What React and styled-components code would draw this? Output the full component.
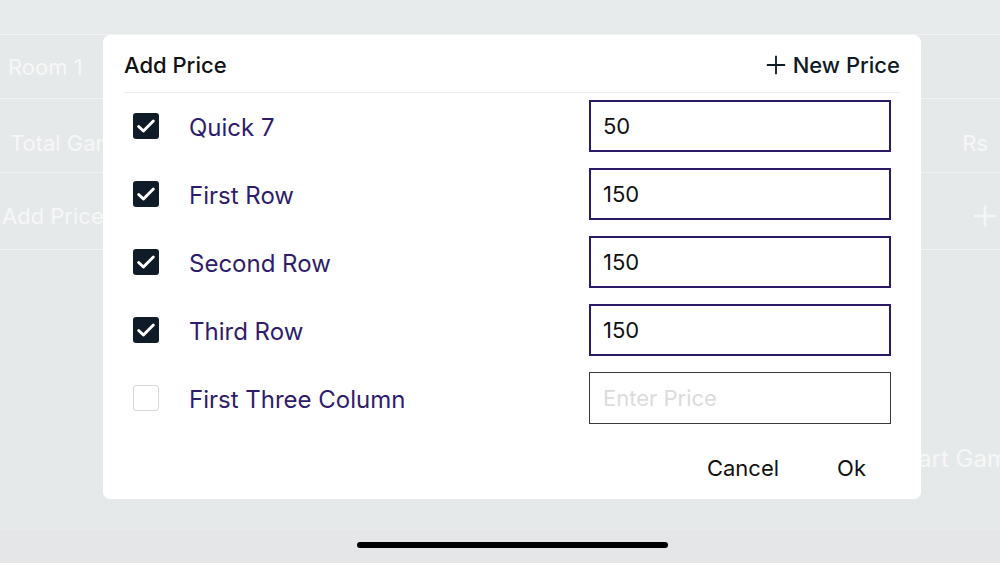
import React, { useState } from "react";
import styled, { createGlobalStyle } from "styled-components";

const GlobalStyle = createGlobalStyle`
  * { box-sizing: border-box; }
  html, body { margin: 0; padding: 0; }
  body {
    width: 1000px;
    height: 563px;
    overflow: hidden;
    font-family: Inter, "Noto Sans", sans-serif;
    background: #e6e9ea;
  }
`;

const PRICES = [
  { id: 1, name: "Quick 7", value: "50", checked: true },
  { id: 2, name: "First Row", value: "150", checked: true },
  { id: 3, name: "Second Row", value: "150", checked: true },
  { id: 4, name: "Third Row", value: "150", checked: true },
  { id: 5, name: "First Three Column", value: "", checked: false },
];

const CheckIcon = () => (
  <svg width="22" height="22" viewBox="0 0 24 24" fill="none">
    <path
      d="M4 12.5l5.2 5L20 6.5"
      stroke="#fff"
      strokeWidth="3.2"
      strokeLinecap="round"
      strokeLinejoin="round"
    />
  </svg>
);

const PlusIcon = ({ size = 22, color = "#0f1b24", weight = 2 }) => (
  <svg width={size} height={size} viewBox="0 0 24 24" fill="none">
    <path d="M12 2v20M2 12h20" stroke={color} strokeWidth={weight} />
  </svg>
);

const App = () => {
  const [prices, setPrices] = useState(PRICES);
  const toggle = id =>
    setPrices(prices.map(p => (p.id === id ? { ...p, checked: !p.checked } : p)));
  const change = (id, value) =>
    setPrices(prices.map(p => (p.id === id ? { ...p, value } : p)));

  return (
    <Screen>
      <GlobalStyle />
      <TopBand />
      <BgRow height={64}>
        <BgText>Room 1</BgText>
      </BgRow>
      <BgRow height={74} shift={14}>
        <BgText left={10}>Total Games</BgText>
        <BgText>Rs</BgText>
      </BgRow>
      <BgRow height={77} shift={10}>
        <BgText left={2}>Add Price</BgText>
        <PlusIcon size={26} color="#f4f6f6" weight={2.5} />
      </BgRow>
      <Filler>
        <StartText>Start Game</StartText>
      </Filler>
      <HomeArea>
        <HomeBar />
      </HomeArea>

      <Modal>
        <Header>
          <Title>Add Price</Title>
          <NewPrice>
            <PlusIcon size={22} />
            New Price
          </NewPrice>
        </Header>
        <List>
          {prices.map(p => (
            <Row key={p.id}>
              <Check checked={p.checked} onClick={() => toggle(p.id)}>
                {p.checked && <CheckIcon />}
              </Check>
              <Label>{p.name}</Label>
              <PriceInput
                active={p.checked}
                value={p.value}
                placeholder="Enter Price"
                onChange={e => change(p.id, e.target.value)}
              />
            </Row>
          ))}
        </List>
        <Footer>
          <TextButton>Cancel</TextButton>
          <TextButton>Ok</TextButton>
        </Footer>
      </Modal>
    </Screen>
  );
};

const Screen = styled.div`
  position: relative;
  width: 1000px;
  height: 563px;
  overflow: hidden;
  display: flex;
  flex-direction: column;
  background: #e6e9ea;
`;

const TopBand = styled.div`
  height: 35px;
  flex: none;
  background: #e8ebec;
  border-bottom: 1px solid #f2f4f4;
`;

const BgRow = styled.div`
  height: ${p => p.height}px;
  flex: none;
  display: flex;
  align-items: center;
  justify-content: space-between;
  padding: ${p => p.shift || 0}px 2px 0 8px;
  border-bottom: 1px solid #f1f3f4;
`;

const BgText = styled.span`
  margin-left: ${p => (p.left !== undefined ? p.left - 8 : 0)}px;
  margin-right: 10px;
  font-size: 22px;
  color: #f6f7f7;
`;

const Filler = styled.div`
  flex: 1;
  display: flex;
  justify-content: flex-end;
  align-items: flex-start;
  padding-top: 194px;
  overflow: hidden;
`;

const StartText = styled.span`
  flex: none;
  margin-right: -22px;
  font-size: 24px;
  white-space: nowrap;
  color: #f6f7f7;
`;

const HomeArea = styled.div`
  height: 33px;
  flex: none;
  background: #e4e6e7;
  display: flex;
  justify-content: center;
  padding-top: 12px;
`;

const HomeBar = styled.div`
  width: 311px;
  height: 6px;
  border-radius: 3px;
  background: #000;
  margin-left: 25px;
`;

const Modal = styled.div`
  position: absolute;
  left: 103px;
  top: 35px;
  width: 818px;
  height: 464px;
  background: #ffffff;
  border-radius: 7px;
  padding: 0 21px;
  display: flex;
  flex-direction: column;
`;

const Header = styled.div`
  height: 58px;
  display: flex;
  align-items: center;
  justify-content: space-between;
  border-bottom: 1px solid #ebeced;
  padding-top: 2px;
`;

const Title = styled.h2`
  margin: 0;
  font-size: 22px;
  font-weight: 500;
  color: #111;
`;

const NewPrice = styled.button`
  display: flex;
  align-items: center;
  gap: 6px;
  border: none;
  background: none;
  padding: 0;
  font-family: inherit;
  font-size: 22px;
  font-weight: 500;
  color: #0f1b24;
`;

const List = styled.div`
  display: flex;
  flex-direction: column;
  gap: 16px;
  padding: 7px 9px 0 9px;
`;

const Row = styled.div`
  height: 52px;
  display: flex;
  align-items: center;
`;

const Check = styled.div`
  width: 26px;
  height: 26px;
  flex: none;
  border-radius: 3px;
  display: flex;
  align-items: center;
  justify-content: center;
  background: ${p => (p.checked ? "#0f1c27" : "#fff")};
  border: ${p => (p.checked ? "none" : "1.5px solid #d6d6d6")};
  cursor: pointer;
`;

const Label = styled.span`
  margin-left: 30px;
  flex: 1;
  padding-top: 2px;
  font-size: 24px;
  color: #2f1d6b;
`;

const PriceInput = styled.input`
  width: 302px;
  height: 52px;
  border: ${p => (p.active ? "2px solid #2d1a66" : "1px solid #3a3a3a")};
  padding: 0 0 0 ${p => (p.active ? 12 : 13)}px;
  outline: none;
  font-family: inherit;
  font-size: 22px;
  color: #111;
  &::placeholder {
    color: #dcdcdc;
  }
`;

const Footer = styled.div`
  flex: 1;
  display: flex;
  justify-content: flex-end;
  align-items: center;
  gap: 26px;
  padding: 12px 18px 0 0;
`;

const TextButton = styled.button`
  border: none;
  background: none;
  padding: 8px 16px;
  font-family: inherit;
  font-size: 22px;
  color: #111;
  cursor: pointer;
`;

export default App;
